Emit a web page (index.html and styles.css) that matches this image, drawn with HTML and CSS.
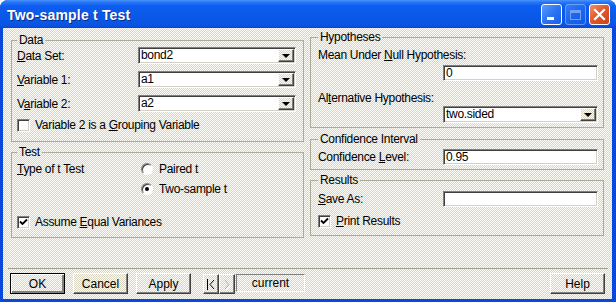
FILE: index.html
```html
<!DOCTYPE html>
<html>
<head>
<meta charset="utf-8">
<link rel="stylesheet" href="styles.css">
</head>
<body>
<div class="window">
  <div class="titlebar">
    <span class="title">Two-sample t Test</span>
    <div class="tb-buttons">
      <span class="tb-btn tb-min"><span class="min-bar"></span></span>
      <span class="tb-btn tb-max"><span class="max-box"></span></span>
      <span class="tb-btn tb-close">
        <svg width="13" height="13" viewBox="0 0 13 13"><path d="M2 2 L11 11 M11 2 L2 11" stroke="#fff" stroke-width="2.2" stroke-linecap="square"/></svg>
      </span>
    </div>
  </div>
  <div class="client">
    <div class="main">
      <div class="col col-left">
        <fieldset class="group group-data">
          <legend>Data</legend>
          <div class="row">
            <span class="lbl"><u>D</u>ata Set:</span>
            <div class="combo"><span class="combo-value">bond2</span><span class="combo-btn"><i class="arrow"></i></span></div>
          </div>
          <div class="row">
            <span class="lbl"><u>V</u>ariable 1:</span>
            <div class="combo"><span class="combo-value">a1</span><span class="combo-btn"><i class="arrow"></i></span></div>
          </div>
          <div class="row">
            <span class="lbl">V<u>a</u>riable 2:</span>
            <div class="combo"><span class="combo-value">a2</span><span class="combo-btn"><i class="arrow"></i></span></div>
          </div>
          <div class="check check-group"><span class="box"></span><span>Variable 2 is a <u>G</u>rouping Variable</span></div>
        </fieldset>
        <fieldset class="group group-test">
          <legend>Test</legend>
          <div class="test-type">
            <span class="lbl lbl-type"><u>T</u>ype of t Test</span>
            <div class="radios">
              <div class="radio-row"><span class="radio"></span><span>Paired t</span></div>
              <div class="radio-row"><span class="radio checked"></span><span>Two-sample t</span></div>
            </div>
          </div>
          <div class="check check-equal"><span class="box checked"><svg width="9" height="9" viewBox="0 0 9 9"><path d="M1 3.5 L3.5 6 L8 1.5" fill="none" stroke="#000" stroke-width="1.8"/></svg></span><span>Assume <u>E</u>qual Variances</span></div>
        </fieldset>
      </div>
      <div class="col col-right">
        <fieldset class="group group-hyp">
          <legend>Hypotheses</legend>
          <div class="stack-label">Mean Under <u>N</u>ull Hypothesis:</div>
          <div class="field field-right">0</div>
          <div class="stack-label stack-alt">Al<u>t</u>ernative Hypothesis:</div>
          <div class="combo combo-right"><span class="combo-value">two.sided</span><span class="combo-btn"><i class="arrow"></i></span></div>
        </fieldset>
        <fieldset class="group group-conf">
          <legend>Confidence Interval</legend>
          <div class="row row-right">
            <span class="lbl">Confidence <u>L</u>evel:</span>
            <div class="field">0.95</div>
          </div>
        </fieldset>
        <fieldset class="group group-res">
          <legend>Results</legend>
          <div class="row row-right">
            <span class="lbl"><u>S</u>ave As:</span>
            <div class="field"></div>
          </div>
          <div class="check check-print"><span class="box checked"><svg width="9" height="9" viewBox="0 0 9 9"><path d="M1 3.5 L3.5 6 L8 1.5" fill="none" stroke="#000" stroke-width="1.8"/></svg></span><span><u>P</u>rint Results</span></div>
        </fieldset>
      </div>
    </div>
    <div class="footer">
      <span class="btn btn-default">OK</span>
      <span class="btn">Cancel</span>
      <span class="btn">Apply</span>
      <div class="nav">
        <span class="nav-btn"><svg width="10" height="11" viewBox="0 0 10 11"><path d="M1.5 0 V11" stroke="#000" stroke-width="1"/><path d="M8 1 L4 5.5 L8 10" fill="none" stroke="#000" stroke-width="1"/></svg></span>
        <span class="nav-btn disabled"><svg width="10" height="11" viewBox="0 0 10 11"><path d="M3 1 L7 5.5 L3 10" fill="none" stroke="#fff" stroke-width="1" transform="translate(1,1)"/><path d="M3 1 L7 5.5 L3 10" fill="none" stroke="#a8a696" stroke-width="1"/></svg></span>
        <span class="current">current</span>
      </div>
      <span class="btn btn-help">Help</span>
    </div>
  </div>
</div>
</body>
</html>
```

FILE: styles.css
```css
* { box-sizing: border-box; }

body {
  margin: 0;
  font-family: "Liberation Sans", Arial, sans-serif;
  font-size: 12px;
  letter-spacing: -0.3px;
  color: #000;
}

u { text-decoration: underline; text-underline-offset: 1px; }

.window {
  width: 616px;
  height: 302px;
  display: flex;
  flex-direction: column;
  background: #0a48dc;
  border-radius: 8px 8px 0 0;
  overflow: hidden;
}

.titlebar {
  height: 28px;
  flex: none;
  display: flex;
  align-items: center;
  padding: 1px 6px 0 7px;
  background: linear-gradient(to bottom, #4a94ff 0, #2a78f6 2px, #0c5ef0 6px, #0a58e8 16px, #0a56e4 24px, #0848d6 28px);
}

.title {
  color: #fff;
  font-weight: bold;
  font-size: 14px;
  letter-spacing: 0.2px;
  text-shadow: 1px 1px 0 #0b2a8c;
  flex: 1;
}

.tb-buttons { display: flex; gap: 3px; }

.tb-btn {
  width: 21px;
  height: 21px;
  border: 1px solid #fff;
  border-radius: 3px;
  display: flex;
  align-items: center;
  justify-content: center;
  position: relative;
  background: linear-gradient(135deg, #5a9cff 0%, #2c74f2 50%, #1a5ee8 100%);
}

.min-bar {
  position: absolute;
  left: 5px;
  bottom: 4px;
  width: 7px;
  height: 3px;
  background: #fff;
}

.tb-max {
  opacity: 0.5;
  border-color: #c8d8ff;
}

.max-box {
  width: 11px;
  height: 10px;
  border: 1px solid #dde6ff;
  border-top-width: 3px;
}

.tb-close {
  background: linear-gradient(135deg, #f0906a 0%, #e35a2c 45%, #c9421a 100%);
}

.client {
  flex: 1;
  margin: 0 4px 3px 3px;
  background: repeating-conic-gradient(#fdfcf6 0 25%, #d9d5c1 0 50%) 0 0 / 2px 2px;
  display: flex;
  flex-direction: column;
}

.main {
  display: grid;
  grid-template-columns: 293px 294px;
  column-gap: 6px;
  padding: 2px 0 0 8px;
  align-items: start;
}

.col { display: flex; flex-direction: column; }
.col-left { padding-top: 3px; }

.group {
  margin: 0;
  border: 1px solid #aeac98;
  padding: 0 5px;
  min-width: 0;
}

.group legend {
  padding: 0 2px;
  line-height: 14px;
  height: 14px;
}

.row {
  display: flex;
  align-items: center;
  height: 17px;
}

.lbl { width: 121px; flex: none; }

.group-data { padding-bottom: 9px; }
.group-data .row + .row { margin-top: 7px; }

.combo {
  width: 158px;
  height: 17px;
  display: flex;
  align-items: stretch;
  background: #fff;
  border: 1px solid;
  border-color: #808080 #fff #fff #808080;
  box-shadow: inset 1px 1px #404040, inset -1px -1px #d4d0c8;
  padding: 1px;
}

.combo-value {
  flex: 1;
  padding-left: 1px;
  line-height: 13px;
}

.combo-btn {
  width: 16px;
  flex: none;
  display: flex;
  align-items: center;
  justify-content: center;
  background: repeating-conic-gradient(#fdfcf6 0 25%, #d9d5c1 0 50%) 0 0 / 2px 2px;
  border: 1px solid;
  border-color: #fff #404040 #404040 #fff;
  box-shadow: inset -1px -1px #808080;
}

.arrow {
  width: 0;
  height: 0;
  border-left: 4px solid transparent;
  border-right: 4px solid transparent;
  border-top: 4px solid #000;
  margin-top: 1px;
}

.check {
  display: flex;
  align-items: center;
  height: 14px;
  gap: 5px;
}

.box {
  width: 13px;
  height: 13px;
  flex: none;
  background: #fff;
  border: 1px solid;
  border-color: #808080 #fff #fff #808080;
  box-shadow: inset 1px 1px #404040, inset -1px -1px #d4d0c8;
  display: flex;
  align-items: center;
  justify-content: center;
}

.check-group { margin-top: 6px; }

.group-test { margin-top: 3px; padding-bottom: 8px; }

.test-type {
  display: flex;
  padding-top: 0;
}

.lbl-type { height: 20px; line-height: 20px; width: 124px; }

.radios { display: flex; flex-direction: column; }

.radio-row {
  display: flex;
  align-items: center;
  height: 20px;
  gap: 6px;
}

.radio {
  width: 12px;
  height: 12px;
  border-radius: 50%;
  background: #fff;
  border: 1px solid;
  border-color: #808080 #fff #fff #808080;
  box-shadow: inset 1px 1px #404040;
  display: flex;
  align-items: center;
  justify-content: center;
}

.radio.checked::after {
  content: "";
  width: 4px;
  height: 4px;
  border-radius: 50%;
  background: #000;
}

.check-equal { margin-top: 16px; }

.group-hyp { padding: 0 5px 4px 7px; }
.group-hyp legend { margin-left: 0; }

.stack-label {
  line-height: 14px;
  margin-top: 4px;
}

.stack-alt { margin-top: 10px; }

.field {
  width: 155px;
  height: 16px;
  background: #fff;
  border: 1px solid;
  border-color: #808080 #fff #fff #808080;
  box-shadow: inset 1px 1px #404040, inset -1px -1px #d4d0c8;
  padding: 0 0 0 2px;
  line-height: 14px;
}

.field-right { margin: 3px 0 0 auto; }

.combo-right { width: 155px; margin: 1px 0 0 auto; }

.group-conf { margin-top: 4px; padding: 3px 5px 4px 7px; }

.row-right { justify-content: space-between; height: 16px; }
.row-right .lbl { width: auto; }

.group-res { margin-top: 3px; padding: 4px 5px 7px 7px; }

.check-print { margin-top: 7px; }

.footer {
  margin: auto 4px 0 5px;
  border-top: 1px solid #a3a18e;
  display: flex;
  align-items: flex-start;
  padding: 4px 3px 5px 2px;
  gap: 8px;
}

.btn {
  width: 55px;
  height: 21px;
  display: flex;
  align-items: center;
  justify-content: center;
  background: repeating-conic-gradient(#fdfcf6 0 25%, #d9d5c1 0 50%) 0 0 / 2px 2px;
  border: 1px solid;
  border-color: #fff #404040 #404040 #fff;
  box-shadow: inset -1px -1px #808080;
  letter-spacing: 0;
}

.btn-default {
  border: 1px solid #000;
  box-shadow: inset 1px 1px #fff, inset -2px -2px #808080;
}

.nav {
  display: flex;
  margin-left: 4px;
  align-items: flex-start;
}

.nav-btn {
  width: 16px;
  height: 20px;
  display: flex;
  align-items: center;
  justify-content: center;
  border: 1px solid;
  border-color: #fff #404040 #404040 #fff;
  box-shadow: inset -1px -1px #808080;
  margin-top: 1px;
}

.current {
  width: 69px;
  height: 18px;
  margin: 1px 0 0 1px;
  display: flex;
  align-items: center;
  justify-content: center;
  border: 1px solid;
  border-color: #808080 #fff #fff #808080;
  letter-spacing: 0;
}

.btn-help { margin-left: auto; }
```
